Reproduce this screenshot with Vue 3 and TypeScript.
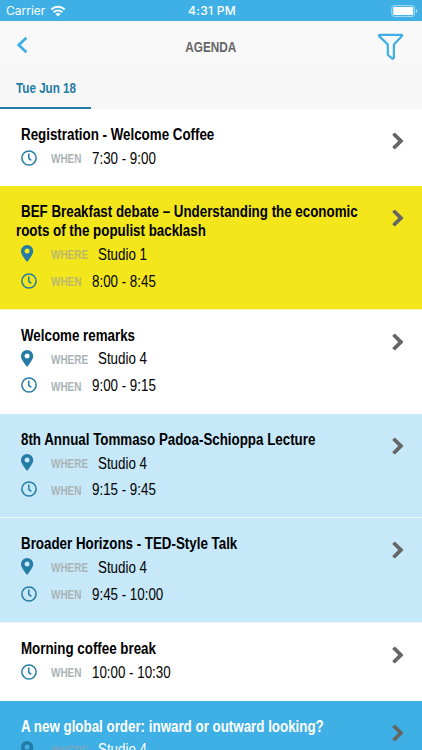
<script setup lang="ts">
interface Session {
  title: string
  room?: string
  time?: string
  tone: 'plain' | 'yellow' | 'pale' | 'blue'
}

const sessions: Session[] = [
  { title: 'Registration - Welcome Coffee', time: '7:30 - 9:00', tone: 'plain' },
  { title: 'BEF Breakfast debate – Understanding the economic roots of the populist backlash', room: 'Studio 1', time: '8:00 - 8:45', tone: 'yellow' },
  { title: 'Welcome remarks', room: 'Studio 4', time: '9:00 - 9:15', tone: 'plain' },
  { title: '8th Annual Tommaso Padoa-Schioppa Lecture', room: 'Studio 4', time: '9:15 - 9:45', tone: 'pale' },
  { title: 'Broader Horizons - TED-Style Talk', room: 'Studio 4', time: '9:45 - 10:00', tone: 'pale' },
  { title: 'Morning coffee break', time: '10:00 - 10:30', tone: 'plain' },
  { title: 'A new global order: inward or outward looking?', room: 'Studio 4', tone: 'blue' },
]
</script>

<template>
  <div class="screen">
    <div class="status">
      <div class="carrier">
        <span>Carrier</span>
        <svg width="16" height="12" viewBox="0 0 16 12" fill="none" stroke="#fff" stroke-width="2.1">
          <path d="M1.4 4.4C5.2.8 10.8.8 14.6 4.4" />
          <path d="M3.7 7.2C6.2 4.9 9.8 4.9 12.3 7.2" />
          <path d="M8 11.4 5.5 8.9C7 7.6 9 7.6 10.5 8.9Z" fill="#fff" stroke="none" />
        </svg>
      </div>
      <span class="clock">4:31 PM</span>
      <svg class="battery" width="27" height="12" viewBox="0 0 27 12">
        <rect x=".8" y=".6" width="22.8" height="10.8" rx="2.5" fill="none" stroke="#a9dcf5" />
        <rect x="2.2" y="2" width="20" height="8" rx="1.2" fill="#fff" />
        <path d="M25 4v4c1.8-.6 1.8-3.4 0-4Z" fill="#a9dcf5" />
      </svg>
    </div>

    <header class="bar">
      <svg class="back" width="12" height="18" viewBox="0 0 12 18" fill="none" stroke="#3eaee5" stroke-width="2.7">
        <path d="M9.4 1.8 1.8 9l7.6 7.2" />
      </svg>
      <h1>AGENDA</h1>
      <svg class="filter" width="28" height="28" viewBox="0 0 28 28" fill="none" stroke="#3eaee5" stroke-width="2.2" stroke-linejoin="round">
        <path d="M2.6 1.9H24.4Q25.6 2 25 3.1L16.9 11.4V24.5Q16.6 26.1 15.1 25.4L11.6 22.6Q10.8 22 10.8 21V11.4L2.2 3.1Q1.6 2.1 2.6 1.9Z" />
      </svg>
    </header>

    <nav class="tabs"><div class="tab"><span>Tue Jun 18</span></div></nav>

    <main>
      <article v-for="s in sessions" :key="s.title" class="session" :class="s.tone">
        <div class="body">
          <h2>{{ s.title }}</h2>
          <div v-if="s.room" class="meta place">
            <span class="icon">
              <svg width="13" height="17" viewBox="0 0 13 17">
                <path fill="#247ba5" fill-rule="evenodd" d="M6.1 0a6.1 6.1 0 0 1 6.1 6.1c0 2.8-1.5 4.6-5.4 10.2a.9.9 0 0 1-1.4 0C1.5 10.7 0 8.9 0 6.1A6.1 6.1 0 0 1 6.1 0Zm0 3.6a2.5 2.5 0 1 0 0 5 2.5 2.5 0 0 0 0-5Z" />
              </svg>
            </span>
            <span class="label where">WHERE</span>
            <span class="value">{{ s.room }}</span>
          </div>
          <div v-if="s.time" class="meta">
            <span class="icon">
              <svg width="16" height="16" viewBox="0 0 16 16" fill="none" stroke="#247ba5" stroke-width="1.5">
                <circle cx="8" cy="8" r="7.1" />
                <path d="M7.8 3.4V8.3L10.3 10.3" />
              </svg>
            </span>
            <span class="label when">WHEN</span>
            <span class="value">{{ s.time }}</span>
          </div>
        </div>
        <svg class="arrow" width="12" height="18" viewBox="0 0 12 18" fill="#666">
          <path d="M3.4.9 10.9 8.2q.8.8 0 1.6L3.4 17.1q-.6.5-1.2 0L.7 15.7q-.6-.6 0-1.2L6.2 9 .7 3.5q-.6-.6 0-1.2L2.2.9q.6-.5 1.2 0Z" />
        </svg>
      </article>
    </main>
  </div>
</template>

<style>
body { overflow: hidden; }
</style>

<style scoped>
.screen {
  width: 422px;
  height: 750px;
  overflow: hidden;
  background: #fff;
  font-family: "Liberation Sans", sans-serif;
}
.status {
  height: 21px;
  display: grid;
  grid-template-columns: 1fr auto 1fr;
  align-items: center;
  box-sizing: border-box;
  padding: 0 4px 0 6px;
  background: #3eb0e6;
  color: #fff;
  font: 12px/21px Inter, sans-serif;
}
.carrier { display: flex; align-items: center; gap: 5px; }
.clock { font-weight: 500; letter-spacing: .3px; }
.battery { justify-self: end; }
.bar {
  height: 44px;
  display: grid;
  grid-template-columns: 1fr auto 1fr;
  align-items: center;
  box-sizing: border-box;
  padding: 4px 17px 0 17px;
  background: #f9f9f9;
}
.back { margin-top: -1px; }
h1 {
  margin: 3px 0 0;
  font-size: 14.2px;
  line-height: 18px;
  color: #666;
  transform: scaleX(.83);
}
.filter { justify-self: end; margin-top: 4px; }
.tabs { height: 43.5px; display: flex; background: #f7f7f7; }
.tab {
  width: 91px;
  box-sizing: border-box;
  padding: 2px 0 0 15.5px;
  border-bottom: 2px solid #247ba5;
  color: #247ba5;
  font-size: 14.5px;
  line-height: 42px;
  font-weight: 700;
  white-space: nowrap;
}
.tab span { display: inline-block; transform: scaleX(.805); transform-origin: left; }
.session {
  display: flex;
  align-items: flex-start;
  box-sizing: border-box;
  padding: 16px 18px 14.7px 15.5px;
  border-bottom: 1px solid rgba(255, 255, 255, .65);
}
.body { width: 376px; flex: none; }
h2 {
  width: 416px;
  margin: 0 0 1px;
  text-indent: 6px;
  font-size: 16px;
  line-height: 19px;
  color: #000;
  transform: scaleX(.834);
  transform-origin: left;
}
.meta { height: 26.3px; display: flex; align-items: center; padding-left: 5px; }
.place { height: 27px; margin-top: -1px; margin-bottom: .3px; }
.icon { width: 30.5px; flex: none; display: flex; }
.label {
  box-sizing: border-box;
  padding-top: 3px;
  font-size: 12px;
  font-weight: 700;
  color: #aab3b6;
  transform: scaleX(.83);
  transform-origin: left;
}
.where { width: 47px; }
.when { width: 41px; }
.value {
  padding-top: 1px;
  font-size: 16.3px;
  color: #000;
  white-space: nowrap;
  transform: scaleX(.82);
  transform-origin: left;
}
.arrow { flex: none; margin: 7px 0 0 auto; }
.yellow { background: #f3e61b; }
.yellow .label { color: #bdb96c; }
.pale { background: #c6e8f8; }
.blue { height: 104px; background: #3eb0e6; }
.blue h2, .blue .value { color: #fff; }
.blue .label { color: #78a4bb; }
</style>
